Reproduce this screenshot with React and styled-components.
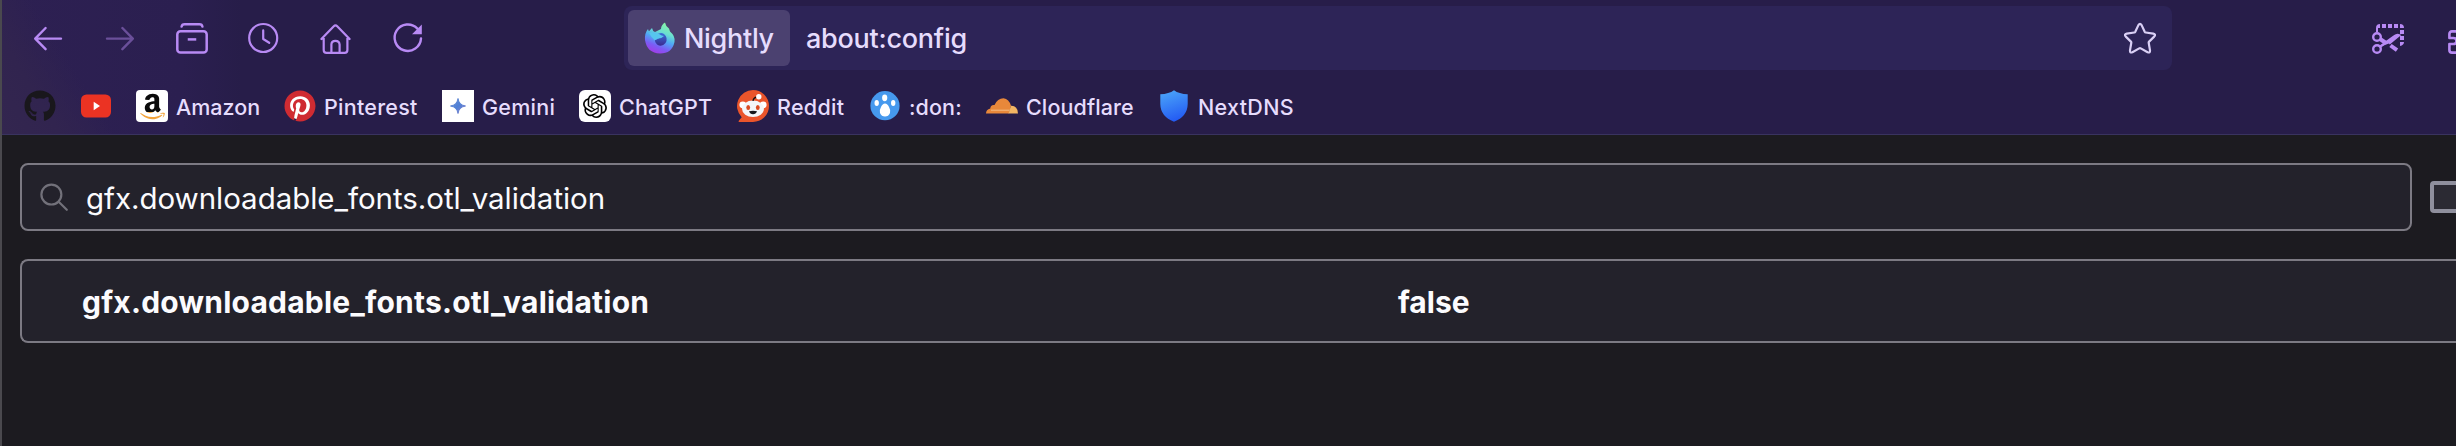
import React from "react";
import styled, { createGlobalStyle } from "styled-components";
import { FaGithub, FaAmazon, FaPinterest } from "react-icons/fa";
import { SiOpenai } from "react-icons/si";

const Global = createGlobalStyle`
  * { box-sizing: border-box; }
  body { margin: 0; background: #1c1b20; overflow: hidden; }
`;

const Window = styled.div`
  width: 100vw;
  height: 446px;
  display: flex;
  flex-direction: column;
  overflow: hidden;
  border-left: 2px solid #4a494e;
  background: #1c1b20;
  color: #fbfbfe;
  font-family: Inter, "Liberation Sans", sans-serif;
`;

const Chrome = styled.header`
  flex: none;
  height: 135px;
  border-bottom: 1px solid #39335f;
  color: #e6dcfd;
  background:
    linear-gradient(58deg, #33264f 0, #31244f 50px, rgba(49, 36, 79, 0) 96px),
    linear-gradient(90deg, #2d2052 0, #2b1f50 180px, #271d49 240px);
`;

const Toolbar = styled.div`
  display: flex;
  align-items: flex-start;
  height: 76px;
  padding: 6px 0 0 30px;
`;

const ToolButton = styled.span`
  flex: none;
  width: 32px;
  height: 32px;
  margin: 16px ${(p) => p.$after ?? 40}px 0 0;
  color: #b88af4;
  opacity: ${(p) => (p.$disabled ? 0.45 : 1)};
  svg { display: block; width: 32px; height: 32px; overflow: visible; }
`;

const UrlBar = styled.div`
  flex: none;
  display: flex;
  align-items: center;
  width: 1548px;
  height: 64px;
  padding: 0 16px 0 4px;
  margin-right: 200px;
  border-radius: 8px;
  background: #2d2457;
  font-size: 27px;
  font-weight: 500;
  white-space: nowrap;
`;

const Identity = styled.div`
  display: flex;
  align-items: center;
  width: 162px;
  height: 56px;
  padding-left: 16px;
  gap: 8px;
  border-radius: 6px;
  background: #4b4170;
  svg { flex: none; width: 32px; height: 32px; }
`;

const Label = styled.span`
  padding-top: ${(p) => p.$drop || 0}px;
  white-space: nowrap;
  letter-spacing: ${(p) => p.$track || 0}px;
`;

const Address = styled(Label)`
  flex: 1;
  padding-left: 16px;
`;

const StarIcon = styled.svg`
  width: 32px;
  height: 32px;
  color: #d9cff5;
`;

const Bookmarks = styled.nav`
  display: flex;
  align-items: center;
  height: 60px;
  padding-left: 22px;
  font-size: 21.5px;
  font-weight: 500;
`;

const Bookmark = styled.div`
  flex: none;
  display: flex;
  align-items: center;
  gap: 8px;
  margin-right: 24px;
`;

const BookmarkLabel = styled(Label)`
  width: ${(p) => p.$width}px;
  padding-top: 2px;
`;

const Favicon = styled.span`
  flex: none;
  display: grid;
  place-items: center;
  width: 32px;
  height: 32px;
  border-radius: ${(p) => p.$radius || 0}px;
  background: ${(p) => p.$bg || "none"};
  color: ${(p) => p.$color || "#000"};
  svg { display: block; width: ${(p) => p.$size || 32}px; height: ${(p) => p.$size || 32}px; }
`;

const Content = styled.main`
  padding: 28px 0 0 18px;
`;

const SearchRow = styled.div`
  display: flex;
  align-items: center;
  gap: 18px;
`;

const SearchField = styled.div`
  flex: none;
  display: flex;
  align-items: center;
  width: 2392px;
  height: 68px;
  padding-left: 18px;
  gap: 18px;
  border: 2px solid #7c7a83;
  border-radius: 8px;
  background: #23222b;
  font-size: 29.5px;
`;

const SearchGlyph = styled.span`
  flex: none;
  width: 28px;
  height: 28px;
  color: #72717a;
  svg { display: block; width: 28px; height: 28px; }
`;

const CheckBox = styled.span`
  flex: none;
  width: 32px;
  height: 32px;
  border: 4px solid #8f8f9d;
  border-radius: 4px;
  background: #2b2a33;
`;

const PrefRow = styled.div`
  display: grid;
  grid-template-columns: 1316px 1fr;
  align-items: center;
  height: 84px;
  margin-top: 28px;
  padding-left: 60px;
  border: 2px solid #7c7a83;
  border-right: 0;
  border-radius: 8px 0 0 8px;
  background: #23222b;
  font-size: 30px;
  font-weight: 700;
`;

function Stroke({ children, w = 1 }) {
  return (
    <svg viewBox="0 0 16 16" fill="none" stroke="currentColor" strokeWidth={w} strokeLinecap="round" strokeLinejoin="round">
      {children}
    </svg>
  );
}

const Back = () => <Stroke w={1.2}><path d="M14.5 8.3H1.7M6.8 3L1.6 8.3l5.2 5.3" /></Stroke>;
const Forward = () => <Stroke w={1.2}><path d="M1.5 8.3h12.8M9.2 3l5.2 5.3-5.2 5.3" /></Stroke>;
const Library = () => (
  <Stroke w={1.25}>
    <path d="M2.8 2.3Q3 1.1 4.3 1.1H11.7Q13 1.1 13.2 2.3" />
    <rect x=".65" y="4.6" width="14.7" height="10.7" rx="1.6" />
    <path d="M6.5 8.7h3" strokeLinecap="square" />
  </Stroke>
);
const Clock = () => <Stroke w={1.1}><circle cx="7.6" cy="8" r="7" /><path d="M7.6 4.2v4.3l3 1.9" /></Stroke>;
const Home = () => (
  <Stroke w={1.1}>
    <path d="M.7 8.5L6.9 2.1Q7.75 1.2 8.6 2.1L14.8 8.5M1.85 7.4V14Q1.85 15.4 3.25 15.4H12.3Q13.7 15.4 13.7 14V7.4M5.7 15.3V11.3Q5.7 9.4 7.7 9.4T9.8 11.3V15.3" />
  </Stroke>
);
const Reload = () => (
  <Stroke w={1.2}>
    <path d="M14.5 8.2A6.6 6.6 0 1 1 12.7 3.3" />
    <path d="M14.9 1.2V6.1H10z" fill="currentColor" stroke="none" />
  </Stroke>
);
const Search = () => (
  <Stroke w={1.25}>
    <circle cx="6.5" cy="6.6" r="5.7" />
    <path d="M10.8 10.9l4.5 4.4" />
  </Stroke>
);
const Star = () => (
  <StarIcon viewBox="0 0 32 32" fill="none" stroke="currentColor" strokeWidth="2.2" strokeLinejoin="round">
    <path d="M14.4 3.1Q16 .7 17.6 3.1L20.7 9.8Q21 10.4 21.7 10.5L29.3 11.7Q32.2 12.3 30.2 14.6L25.1 19.6Q24.6 20.1 24.7 20.8L26 28.4Q26.2 31.2 23.6 30.2L16.8 26.4Q16 26 15.2 26.4L8.4 30.2Q5.8 31.2 6 28.4L7.3 20.8Q7.4 20.1 6.9 19.6L1.8 14.6Q-.2 12.3 2.7 11.7L10.3 10.5Q11 10.4 11.3 9.8Z" />
  </StarIcon>
);
const Screenshot = () => (
  <svg viewBox="0 0 32 32" fill="none" stroke="currentColor">
    <path d="M4 10V6Q4 2 8 2V6H6V10ZM10 2h4v4h-4zM16 2h4v4h-4zM22 2h4v4h-4zM28 2Q32 2 32 6H28ZM28 8h4v4h-4zM28 14h4v4h-4zM28 20h4Q32 23 28 24z" fill="currentColor" stroke="none" />
    <circle cx="5" cy="15" r="3.8" strokeWidth="2.4" />
    <circle cx="5" cy="27" r="3.8" strokeWidth="2.4" />
    <path d="M8 24.8L22.5 14.3Q25 12.3 27 13.3L17 21.5" strokeWidth="2.5" fill="currentColor" />
    <path d="M8 17L14 21M18.5 23.5L25 28.2" strokeWidth="4" />
  </svg>
);
const Extension = () => (
  <svg viewBox="0 0 32 32" fill="none" stroke="currentColor" strokeWidth="2.6" strokeLinejoin="round">
    <path d="M10 9.4H4Q1.4 9.4 1.4 12V16H5.5Q8.5 16 8.5 19T5.5 22H1.4V28Q1.4 30.6 4 30.6H24V9.4H18" />
  </svg>
);

const Nightly = () => (
  <svg viewBox="0 0 32 32">
    <defs>
      <linearGradient id="flame" x1=".75" y1="0" x2=".35" y2="1">
        <stop offset="0" stopColor="#8cf5a0" />
        <stop offset=".32" stopColor="#6be0d0" />
        <stop offset=".55" stopColor="#4fa8f5" />
        <stop offset=".78" stopColor="#7b5cf5" />
        <stop offset="1" stopColor="#a23ce8" />
      </linearGradient>
      <linearGradient id="globe" x1=".5" y1="0" x2=".5" y2="1">
        <stop offset="0" stopColor="#3a6fd8" />
        <stop offset="1" stopColor="#3b2a91" />
      </linearGradient>
    </defs>
    <path d="M4 7Q4.5 9 5 9.3L8 6Q8.5 9 11 10L17 7Q17 3 21 .5Q21.5 4 25 6.5L26 9.5Q31.5 14 30.5 20Q28 31.5 16 31.5Q3 31 1 18Q.5 11 4 7Z" fill="url(#flame)" />
    <path d="M11 14Q16 9.5 20 12Q24.5 16 21.5 21Q18 25.5 13 22.5Q10.5 20.5 11 18L15 16.5Z" fill="url(#globe)" />
    <path d="M5 11Q11 9 15 12Q18 14 20 14Q17 17 13.5 16.5Q12 18 10.5 18Q7 15 5 11Z" fill="#57c5ee" />
  </svg>
);

const Youtube = () => (
  <svg viewBox="0 0 32 32">
    <rect x="1" y="4.5" width="30" height="23" rx="5.5" fill="#eb3323" />
    <path d="M13.7 11.7L20 16l-6.3 4.3z" fill="#fff" />
  </svg>
);
const AmazonMark = styled.span`
  svg { fill: url(#amazon); }
`;
const Amazon = () => (
  <AmazonMark>
    <FaAmazon />
  </AmazonMark>
);
const Gemini = () => (
  <svg viewBox="0 0 32 32">
    <defs>
      <linearGradient id="spark" x1="0" y1="0" x2="1" y2="1">
        <stop offset="0" stopColor="#6f8fd0" />
        <stop offset=".5" stopColor="#4f80d6" />
        <stop offset="1" stopColor="#8a7fc8" />
      </linearGradient>
      <linearGradient id="amazon" x1="0" y1="0" x2="0" y2="1">
        <stop offset=".7" stopColor="#0b0b0b" />
        <stop offset=".7" stopColor="#f3a33a" />
      </linearGradient>
    </defs>
    <path d="M16 8.5Q17 15 23.5 16Q17 17 16 23.5Q15 17 8.5 16Q15 15 16 8.5Z" fill="url(#spark)" stroke="url(#spark)" strokeWidth="1" />
  </svg>
);
const Reddit = () => (
  <svg viewBox="0 0 32 32">
    <path d="M16 0A16 16 0 0 1 16 32H2.5Q1 32 2 30.5L4.7 27.3A16 16 0 0 1 16 0Z" fill="#ea552b" />
    <circle cx="5.8" cy="14.8" r="3.4" fill="#fff" />
    <circle cx="26.2" cy="14.8" r="3.4" fill="#fff" />
    <ellipse cx="16" cy="18.8" rx="11" ry="8.3" fill="#f3f6f8" />
    <path d="M16 11Q16.5 7.5 20 7" stroke="#111" strokeWidth="1.3" fill="none" />
    <circle cx="21.8" cy="6.8" r="2.7" fill="#fff" />
    <ellipse cx="11.2" cy="17.5" rx="1.9" ry="2.5" fill="#d94a20" />
    <ellipse cx="20.8" cy="17.5" rx="1.9" ry="2.5" fill="#d94a20" />
    <path d="M12 21.3Q16 20.2 20 21.3Q19 24.3 16 24.3T12 21.3Z" fill="#16181c" />
  </svg>
);
const Paw = () => (
  <svg viewBox="0 0 32 32">
    <circle cx="16" cy="15.7" r="14.6" fill="#4699ee" />
    <g fill="#fff">
      <ellipse cx="7.7" cy="13" rx="2.2" ry="3" />
      <ellipse cx="15.7" cy="7.8" rx="2.6" ry="3.4" />
      <ellipse cx="24.2" cy="13" rx="2.2" ry="3" />
      <path d="M16 13.5Q18.5 13.5 20 17Q22 20.5 21 23Q19.5 26.5 16 26.5T11 23Q10 20.5 12 17Q13.5 13.5 16 13.5Z" />
    </g>
  </svg>
);
const Cloudflare = () => (
  <svg viewBox="0 0 32 32">
    <path d="M0 23.5Q0 19.5 4.3 18.5Q4.5 14.5 8.5 15Q11.5 8.5 17.5 8.3Q23 9 25 15.8L23 23.5Z" fill="#e8883a" />
    <path d="M22.5 23.5L25 15.8Q31.5 15.5 32 23.5Z" fill="#f2b563" />
    <path d="M5 20.2H23.5" stroke="#f3bb83" strokeWidth="1" />
  </svg>
);
const Shield = () => (
  <svg viewBox="0 0 32 32">
    <defs>
      <linearGradient id="shield" x1=".3" y1="0" x2=".6" y2="1">
        <stop offset="0" stopColor="#4aa3f8" />
        <stop offset="1" stopColor="#2258f3" />
      </linearGradient>
    </defs>
    <path d="M16 .3Q21 4 29.7 4.3V14Q29.5 26.5 16 31.7Q2.5 26.5 2.3 14V4.3Q11 4 16 .3Z" fill="url(#shield)" />
  </svg>
);

const BOOKMARKS = [
  { icon: <FaGithub />, color: "#19171c" },
  { icon: <Youtube /> },
  { icon: <Amazon />, label: "Amazon", width: 84, bg: "#fff", radius: 4, size: 29 },
  { icon: <FaPinterest />, label: "Pinterest", width: 94, track: 0.25, bg: "radial-gradient(circle, #fff 13px, transparent 14px)", color: "#cf2b32" },
  { icon: <Gemini />, label: "Gemini", width: 73, track: 0.25, bg: "#fff" },
  { icon: <SiOpenai />, label: "ChatGPT", width: 94, track: 0.15, bg: "#fff", radius: 6, size: 24 },
  { icon: <Reddit />, label: "Reddit", width: 68, track: 0.3 },
  { icon: <Paw />, label: ":don:", width: 53, track: 0.1 },
  { icon: <Cloudflare />, label: "Cloudflare", width: 108, track: 0.1 },
  { icon: <Shield />, label: "NextDNS", width: 96, track: 0.3 },
];

const PREF = "gfx.downloadable_fonts.otl_validation";

export default function App() {
  return (
    <Window>
      <Global />
      <Chrome>
        <Toolbar>
          <ToolButton><Back /></ToolButton>
          <ToolButton $disabled><Forward /></ToolButton>
          <ToolButton><Library /></ToolButton>
          <ToolButton><Clock /></ToolButton>
          <ToolButton><Home /></ToolButton>
          <ToolButton $after={200}><Reload /></ToolButton>
          <UrlBar>
            <Identity><Nightly /><Label $drop={1} $track={-0.3}>Nightly</Label></Identity>
            <Address $drop={1} $track={-0.25}>about:config</Address>
            <Star />
          </UrlBar>
          <ToolButton $after={44}><Screenshot /></ToolButton>
          <ToolButton><Extension /></ToolButton>
        </Toolbar>
        <Bookmarks>
          {BOOKMARKS.map((b, i) => (
            <Bookmark key={i}>
              <Favicon $bg={b.bg} $radius={b.radius} $color={b.color} $size={b.size}>{b.icon}</Favicon>
              {b.label && <BookmarkLabel $width={b.width} $track={b.track}>{b.label}</BookmarkLabel>}
            </Bookmark>
          ))}
        </Bookmarks>
      </Chrome>
      <Content>
        <SearchRow>
          <SearchField>
            <SearchGlyph><Search /></SearchGlyph>
            <Label $drop={2} $track={-0.04}>{PREF}</Label>
          </SearchField>
          <CheckBox />
        </SearchRow>
        <PrefRow>
          <Label $drop={2} $track={0.22}>{PREF}</Label>
          <Label $drop={2}>false</Label>
        </PrefRow>
      </Content>
    </Window>
  );
}
